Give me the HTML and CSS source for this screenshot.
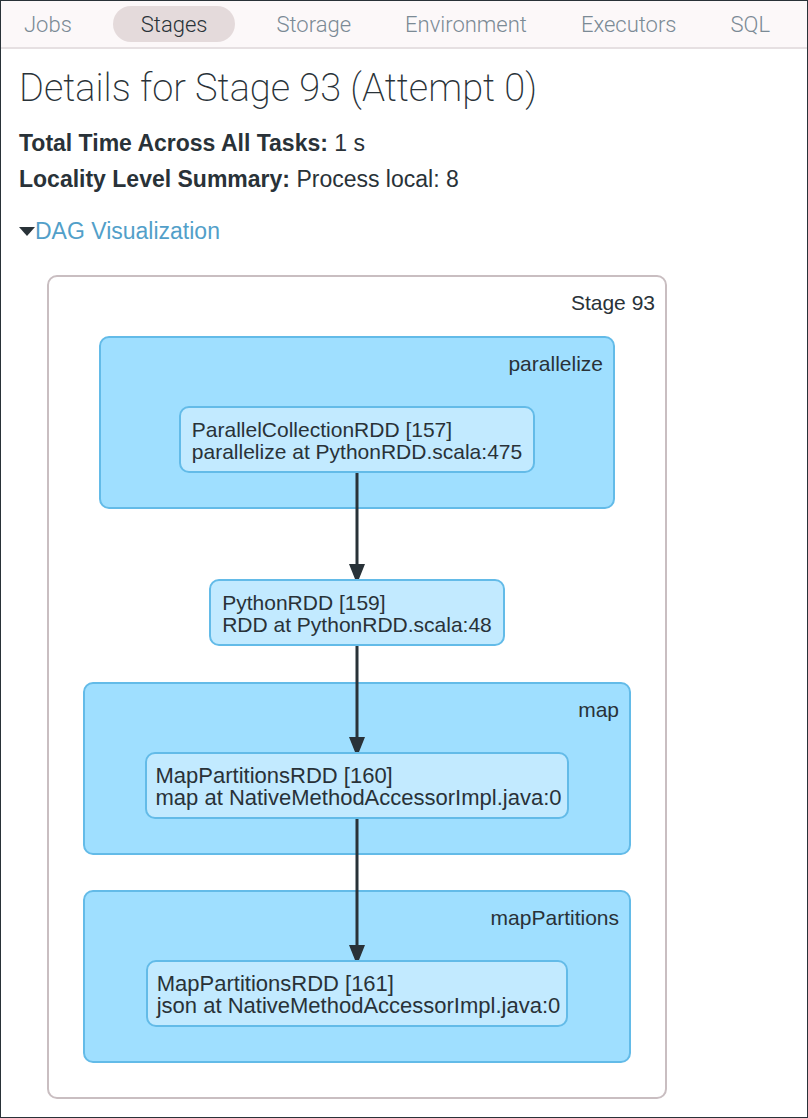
FILE: index.html
```html
<!DOCTYPE html>
<html lang="en">
<head>
<meta charset="utf-8">
<title>Details for Stage 93 (Attempt 0)</title>
<link rel="stylesheet" href="styles.css">
</head>
<body>
<div class="page">
  <nav class="nav">
    <a class="nav-link" href="#jobs">Jobs</a>
    <a class="nav-link active" href="#stages" aria-current="page">Stages</a>
    <a class="nav-link" href="#storage">Storage</a>
    <a class="nav-link" href="#environment">Environment</a>
    <a class="nav-link" href="#executors">Executors</a>
    <a class="nav-link" href="#sql">SQL</a>
  </nav>
  <main class="content">
    <h1 class="title">Details for Stage 93 (Attempt 0)</h1>
    <ul class="summary">
      <li><strong>Total Time Across All Tasks:</strong> 1 s</li>
      <li><strong>Locality Level Summary:</strong> Process local: 8</li>
    </ul>
    <div class="toggle">
      <svg class="caret" width="16" height="9" viewBox="0 0 16 9" aria-hidden="true"><path d="M0 0H16L8 9Z"/></svg>
      <a class="toggle-link" href="#dag">DAG Visualization</a>
    </div>
    <section class="stage" id="dag">
      <h2 class="label">Stage 93</h2>
      <div class="cluster cluster-narrow">
        <h3 class="label">parallelize</h3>
        <div class="node">ParallelCollectionRDD [157]<br>parallelize at PythonRDD.scala:475</div>
      </div>
      <div class="node node-free">PythonRDD [159]<br>RDD at PythonRDD.scala:48</div>
      <div class="cluster">
        <h3 class="label">map</h3>
        <div class="node node-wide">MapPartitionsRDD [160]<br>map at NativeMethodAccessorImpl.java:0</div>
      </div>
      <div class="cluster">
        <h3 class="label">mapPartitions</h3>
        <div class="node node-wide">MapPartitionsRDD [161]<br>json at NativeMethodAccessorImpl.java:0</div>
      </div>
      <svg class="edges" width="20" height="824" viewBox="0 0 20 824" aria-hidden="true">
        <path class="edge" d="M10 198V292M10 371V465M10 544V673"/>
        <path class="arrow" d="M2 289H18L12 304H8ZM2 462H18L12 477H8ZM2 670H18L12 685H8Z"/>
      </svg>
    </section>
  </main>
</div>
</body>
</html>
```
FILE: styles.css
```css
* {
  box-sizing: border-box;
}

body {
  margin: 0;
  background: #fff;
  color: #293238;
  font-family: "Liberation Sans", Arial, sans-serif;
  font-size: 23px;
}

.page {
  min-height: 100vh;
  border: 1px solid #293238;
}

.nav {
  display: flex;
  align-items: center;
  height: 48px;
  overflow: hidden;
  border-bottom: 2px solid #e6e0e2;
  background: #fcf8f9;
}

.nav-link {
  padding: 2px 27px 0;
  margin-left: -4px;
  border-radius: 18px;
  color: #7b8a95;
  font-family: Roboto, sans-serif;
  font-size: 22px;
  font-weight: 300;
  line-height: 34px;
  text-decoration: none;
}

.nav-link + .nav-link {
  margin-left: 0;
}

.nav-link.active {
  margin: 0 14px;
  padding: 2px 28px 0;
  background: #e4dadb;
  color: #293238;
}

.content {
  padding: 15px 18px 18px;
}

.title {
  margin: 0 0 13px;
  font-family: Roboto, sans-serif;
  font-size: 38px;
  font-weight: 200;
  line-height: 48px;
}

.summary {
  margin: 0;
  padding: 0;
  list-style: none;
  line-height: 36px;
}

.toggle {
  display: flex;
  align-items: center;
  margin: 16px 0 26px;
  line-height: 36px;
}

.caret {
  fill: #293238;
}

.toggle-link {
  color: #529fc9;
  text-decoration: none;
}

.stage {
  position: relative;
  display: flex;
  flex-direction: column;
  align-items: center;
  width: 620px;
  max-width: 100%;
  margin-left: 28px;
  padding: 0 34px 34px;
  border: 2px solid #c9bec1;
  border-radius: 10px;
  font-size: 21px;
}

.label {
  align-self: flex-end;
  margin: 0;
  padding: 13px 10px 21px 0;
  font-size: 21px;
  font-weight: 400;
  line-height: 25px;
}

.stage > .label {
  margin-right: -34px;
}

.cluster {
  display: flex;
  flex-direction: column;
  align-items: center;
  align-self: stretch;
  padding-bottom: 34px;
  border: 2px solid #63bbe8;
  border-radius: 10px;
  background: #9fdfff;
}

.cluster > .label {
  padding-bottom: 30px;
}

.cluster-narrow {
  margin: 0 16px;
}

.cluster + .cluster {
  margin-top: 35px;
}

.node {
  padding: 11px 11px 8px;
  border: 2px solid #63bbe8;
  border-radius: 10px;
  background: #c2eaff;
  line-height: 22px;
}

.node-wide {
  padding-left: 9px;
  padding-right: 6px;
  font-size: 22px;
}

.node-free {
  margin: 70px 0 36px;
}

.edges {
  position: absolute;
  top: -2px;
  left: calc(50% - 10px);
}

.edge {
  fill: none;
  stroke: #293238;
  stroke-width: 3;
}

.arrow {
  fill: #293238;
}
```
